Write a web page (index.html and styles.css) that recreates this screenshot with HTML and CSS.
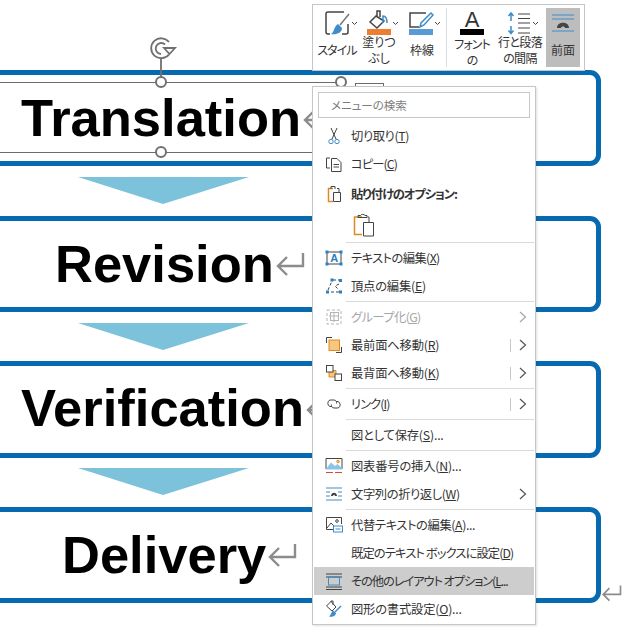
FILE: index.html
```html
<!DOCTYPE html>
<html lang="ja">
<head>
<meta charset="utf-8">
<title>Context menu</title>
<link rel="stylesheet" href="styles.css">
</head>
<body>
<main class="canvas">
  <section class="box">
    <div class="label label-translation"><span>Translation</span><svg class="ret" viewBox="0 0 30 26"><path d="M28 2V15H3M12 6L3 15L12 24"/></svg></div>
  </section>
  <svg class="arrow arrow-second" viewBox="0 0 171 27"><path d="M0 0H171L85 27Z"/></svg>
  <section class="box">
    <div class="label label-revision"><span>Revision</span><svg class="ret" viewBox="0 0 30 26"><path d="M28 2V15H3M12 6L3 15L12 24"/></svg></div>
  </section>
  <svg class="arrow arrow-third" viewBox="0 0 171 27"><path d="M0 0H171L85 27Z"/></svg>
  <section class="box box-tall">
    <div class="label label-verification"><span>Verification</span><svg class="ret" viewBox="0 0 30 26"><path d="M28 2V15H3M12 6L3 15L12 24"/></svg></div>
  </section>
  <svg class="arrow arrow-fourth" viewBox="0 0 171 27"><path d="M0 0H171L85 27Z"/></svg>
  <section class="box">
    <div class="label label-delivery"><span>Delivery</span><svg class="ret" viewBox="0 0 30 26"><path d="M28 2V15H3M12 6L3 15L12 24"/></svg></div>
  </section>
</main>

<svg class="ret ret-end" viewBox="0 0 30 26"><path d="M28 2V15H3M12 6L3 15L12 24"/></svg>

<div class="selection"></div>
<svg class="rotate" viewBox="0 0 28 40"><path class="sel-line" d="M11 21V40"/><path class="sel-line" d="M19 17.500A10 10 0 1 1 19 5M11 17A5.500 5.500 0 1 1 15 7.500"/><path class="sel-line" d="M14 11H25L19.500 17Z"/></svg>
<span class="handle handle-top"></span>
<span class="handle handle-bottom"></span>
<span class="handle handle-right"></span>
<span class="layout-btn"></span>

<div class="toolbar">
  <div class="tool tool-42">
    <svg class="tool-icon" width="42" height="28" viewBox="0 0 42 28"><path class="dark" d="M28 4H12A2 2 0 0 0 10 6V24A2 2 0 0 0 12 26H14M26 26H30A2 2 0 0 0 32 24V16"/><path class="gray" d="M33 6L24 17"/><path class="fill-blue" d="M22 16L26 20C26 25 20 27 15 26C18 25 18 18 22 16Z"/><path class="dark thin" d="M36 14L38.500 16.500L41 14"/></svg>
    <div class="tool-label ls7">スタイル</div>
  </div>
  <div class="tool tool-42">
    <svg class="tool-icon" width="42" height="28" viewBox="0 0 42 28"><path class="dark" d="M18 8L12 14L19 20L26 13ZM19 8V3H22V9"/><path class="blue" d="M25 15V8C27 8 29 10 29 15"/><rect class="bar-orange" x="9" y="21" width="24" height="6"/><path class="dark thin" d="M35 14L37.500 16.500L40 14"/></svg>
    <div class="tool-label">塗りつ<br>ぶし</div>
  </div>
  <div class="tool tool-44">
    <svg class="tool-icon" width="44" height="28" viewBox="0 0 44 28"><path class="dark" d="M26 5H10V19H19"/><path class="blue" d="M31 5L33 7L24 17L20 19L21 15Z"/><rect class="bar-blue" x="9" y="21" width="24" height="6"/><path class="dark thin" d="M35 14L37.500 16.500L40 14"/></svg>
    <div class="tool-label">枠線</div>
  </div>
  <span class="tool-sep"></span>
  <div class="tool tool-44">
    <svg class="tool-icon" width="44" height="28" viewBox="0 0 44 28"><text class="font-a" x="22" y="19">A</text><rect x="10" y="21" width="24" height="6"/></svg>
    <div class="tool-label tool-label-low ls7">フォント<br>の</div>
  </div>
  <div class="tool tool-52">
    <svg class="tool-icon" width="52" height="28" viewBox="0 0 52 28"><path class="blue" d="M17 6V13M14.500 8L17 5L19.500 8M17 18V25M14.500 22.500L17 25.500L19.500 22.500"/><path class="dark thin" d="M24 6H36M24 10.500H36M24 15H36M24 20H36M24 25H36M39 14L41.500 16.500L44 14"/></svg>
    <div class="tool-label ls4">行と段落<br>の間隔</div>
  </div>
  <div class="tool tool-34 tool-active">
    <svg class="tool-icon" width="34" height="28" viewBox="0 0 34 28"><path class="blue thin" d="M6 7H28M6 11H28M6 23H28"/><path class="fill-dark" d="M11 20C11 13 23 13 23 20H19C19 18 15 18 15 20Z"/></svg>
    <div class="tool-label">前面</div>
  </div>
</div>

<nav class="menu">
  <div class="search">メニューの検索</div>

  <div class="row">
    <svg class="ico" viewBox="0 0 18 18"><path class="dark thin" d="M6 1L11 12M12 1L7 12"/><circle class="blue thin" cx="6" cy="14.500" r="2.200"/><circle class="blue thin" cx="12" cy="14.500" r="2.200"/></svg>
    <span class="txt ls2">切り取り(<u>T</u>)</span>
  </div>
  <div class="row">
    <svg class="ico" viewBox="0 0 18 18"><path class="dark thin" d="M5 3H1.500V13H5M6.500 3.500H12L16 7.500V16.500H6.500ZM8.500 9.500H14M8.500 12H14"/></svg>
    <span class="txt ls7">コピー(<u>C</u>)</span>
  </div>
  <div class="row row-head">
    <svg class="ico" viewBox="0 0 18 18"><path class="orange" d="M8 3.500H3.500V16.500H8"/><path class="dark thin" d="M6 4V1.500H10V4M12 3.500H14V7M8.500 7.500H15.500V16.500H8.500Z"/></svg>
    <span class="txt txt-bold ls9">貼り付けのオプション:</span>
  </div>
  <div class="paste-row">
    <svg class="paste-ico" viewBox="0 0 22 24"><path class="orange" d="M9 4H1.500V21.500H9"/><path class="dark thin" d="M5 4.500V2.500H7.500A2.500 2 0 0 1 12 2.500H14V4.500ZM14.500 4H16V9M10.500 9.500H20.500V23H10.500Z"/></svg>
  </div>
  <hr class="sep">

  <div class="row">
    <svg class="ico" viewBox="0 0 18 18"><rect class="dark thin" x="2" y="3" width="14" height="12"/><path class="sq" d="M0.500 1.500h3v3h-3zM14.500 1.500h3v3h-3zM0.500 13.500h3v3h-3zM14.500 13.500h3v3h-3z"/><text class="ico-a" x="9" y="13">A</text></svg>
    <span class="txt ls4">テキストの編集(<u>X</u>)</span>
  </div>
  <div class="row">
    <svg class="ico" viewBox="0 0 18 18"><path class="dark thin dashed" d="M8 3H15M3 13L7 4M14 7L10 9L14 13M6 15H14"/><path class="sq" d="M5.500 1.500h3v3h-3zM14 2h3v3h-3zM1 13.500h3v3h-3zM14 13.500h3v3h-3z"/></svg>
    <span class="txt">頂点の編集(<u>E</u>)</span>
  </div>
  <hr class="sep">

  <div class="row row-off">
    <svg class="ico" viewBox="0 0 18 18"><path class="off dashed" d="M2 2H16V16H2Z"/><rect class="off" x="5.500" y="4.500" width="8" height="8"/><path class="off" d="M4 8H14M9 4V14"/></svg>
    <span class="txt ls4">グループ化(<u>G</u>)</span>
    <svg class="chev" viewBox="0 0 8 12"><path d="M1 1L6.500 6L1 11"/></svg>
  </div>
  <div class="row">
    <svg class="ico" viewBox="0 0 18 18"><path class="dark thin" d="M7 1.500H1.500V7M11 16.500H16.500V11"/><rect class="fill-orange" x="4" y="4" width="10.500" height="10.500"/></svg>
    <span class="txt">最前面へ移動(<u>R</u>)</span>
    <span class="bar"></span>
    <svg class="chev" viewBox="0 0 8 12"><path d="M1 1L6.500 6L1 11"/></svg>
  </div>
  <div class="row">
    <svg class="ico" viewBox="0 0 18 18"><path class="fill-orange" d="M4 6.500H11V13H4Z"/><rect class="dark thin paper" x="1.500" y="1.500" width="6.500" height="6.500"/><rect class="dark thin paper" x="10" y="10" width="6.500" height="6.500"/></svg>
    <span class="txt">最背面へ移動(<u>K</u>)</span>
    <span class="bar"></span>
    <svg class="chev" viewBox="0 0 8 12"><path d="M1 1L6.500 6L1 11"/></svg>
  </div>
  <hr class="sep">

  <div class="row">
    <svg class="ico" viewBox="0 0 18 18"><path class="dark thin" d="M7 11.500H5A3.500 3.500 0 0 1 5 5H9C11 5 12 7 11.500 8.500M11 6.500H13A3.500 3.500 0 0 1 13 13H9C7 13 6 11 6.500 9.500"/></svg>
    <span class="txt ls7">リンク(<u>I</u>)</span>
    <span class="bar"></span>
    <svg class="chev" viewBox="0 0 8 12"><path d="M1 1L6.500 6L1 11"/></svg>
  </div>
  <hr class="sep">

  <div class="row">
    <span class="ico"></span>
    <span class="txt">図として保存(<u>S</u>)...</span>
  </div>
  <hr class="sep">

  <div class="row">
    <svg class="ico" viewBox="0 0 18 18"><path class="dark thin" d="M1 12V1.500H17V12"/><path class="fill-sky" d="M1 12L6 5.500L10 9L12.500 7L17 11V12.500H1Z"/><circle class="fill-orange" cx="13" cy="4.500" r="1.300"/><path class="red" d="M1 15.500H8M10 15.500H17"/></svg>
    <span class="txt">図表番号の挿入(<u>N</u>)...</span>
  </div>
  <div class="row">
    <svg class="ico" viewBox="0 0 18 18"><path class="blue thin" d="M1 3H17M1 7H5M13 7H17M1 11H5M13 11H17M1 15H17"/><path class="fill-dark" d="M6 11C6 6.500 12 6.500 12 11H10C10 9.500 8 9.500 8 11Z"/></svg>
    <span class="txt ls2">文字列の折り返し(<u>W</u>)</span>
    <svg class="chev" viewBox="0 0 8 12"><path d="M1 1L6.500 6L1 11"/></svg>
  </div>
  <hr class="sep">

  <div class="row">
    <svg class="ico" viewBox="0 0 18 18"><path class="dark thin" d="M8 13.500H1.500V1.500H16.500V8M2 12L6 7L9 10"/><circle class="dark thin" cx="12" cy="5" r="1.300"/><rect class="blue thin" x="8.500" y="10" width="9" height="6"/><path class="blue thin" d="M10.500 13H15.500"/></svg>
    <span class="txt ls2">代替テキストの編集(<u>A</u>)...</span>
  </div>
  <div class="row">
    <span class="ico"></span>
    <span class="txt ls7">既定のテキスト ボックスに設定(<u>D</u>)</span>
  </div>
  <div class="row row-hover">
    <svg class="ico" viewBox="0 0 18 18"><path class="dark thin" d="M1 2H17M1 15H17M1 17.500H17M1 5H17"/><rect class="blue thin" x="3.500" y="5" width="11" height="8"/></svg>
    <span class="txt ls9">その他のレイアウト オプション(<u>L</u>...</span>
  </div>
  <div class="row">
    <svg class="ico" viewBox="0 0 18 18"><path class="dark thin" d="M6 1.500L1.500 6L7 11L11 7ZM6 2V1H8V5"/><path class="blue" d="M16 6L10 12"/><path class="fill-blue" d="M8 10.500L11 13C11 16 7 17.500 4 16.500C6 15.500 6 12 8 10.500Z"/></svg>
    <span class="txt">図形の書式設定(<u>O</u>)...</span>
  </div>
</nav>
</body>
</html>
```

FILE: styles.css
```css
html, body {
  margin: 0;
  padding: 0;
  width: 635px;
  height: 627px;
  overflow: hidden;
  background: #fff;
}

body {
  position: relative;
  font-family: "Noto Sans CJK JP", "Noto Sans", sans-serif;
}

/* Flow diagram */
.canvas {
  display: flex;
  flex-direction: column;
  align-items: flex-start;
  padding-top: 70px;
}

.box {
  box-sizing: border-box;
  width: 611px;
  height: 96px;
  margin-left: -10px;
  border: 5px solid #0769b0;
  border-radius: 11px;
  display: flex;
  align-items: center;
}

.box-tall {
  height: 97px;
}

.arrow {
  width: 171px;
  height: 27px;
  margin: 11px 0 12px 78px;
  fill: #7bc2da;
}

.arrow-third {
  margin-bottom: 11px;
}

.arrow-fourth {
  margin-top: 10px;
}

.label {
  display: flex;
  align-items: center;
  font-family: "Liberation Sans", Arial, sans-serif;
  font-size: 52.500px;
  font-weight: 700;
  line-height: 60px;
  color: #000;
  white-space: nowrap;
}

.label-translation { margin-left: 26px; }
.label-revision { margin-left: 60px; }
.label-verification { margin-left: 26px; padding-bottom: 3px; }
.label-delivery { margin-left: 67px; }

.ret {
  width: 30px;
  height: 26px;
  margin-left: 1px;
  fill: none;
  stroke: #8c8c8c;
  stroke-width: 2.400;
}

.ret-end {
  position: absolute;
  left: 601px;
  top: 584px;
  width: 21px;
  height: 18px;
  margin: 0;
}

/* Selection frame */
.selection {
  position: absolute;
  left: -4px;
  top: 82px;
  width: 345px;
  height: 69px;
  border: 1px solid #6b6b6b;
}

.handle {
  position: absolute;
  box-sizing: border-box;
  width: 12px;
  height: 12px;
  border: 2px solid #707070;
  border-radius: 50%;
  background: #fff;
}

.handle-top { left: 155px; top: 76px; }
.handle-bottom { left: 155px; top: 146px; }
.handle-right { left: 335px; top: 76px; }

.rotate {
  position: absolute;
  left: 150px;
  top: 37px;
  width: 28px;
  height: 40px;
  overflow: visible;
}

.sel-line {
  fill: none;
  stroke: #707070;
  stroke-width: 1.800;
}

.layout-btn {
  position: absolute;
  left: 355px;
  top: 83px;
  width: 27px;
  height: 12px;
  border: 1px solid #6b6b6b;
  background: #fff;
}

/* Floating toolbar */
.toolbar {
  position: absolute;
  left: 312px;
  top: 4px;
  box-sizing: border-box;
  width: 273px;
  height: 67px;
  padding: 3px 4px 3px 3px;
  display: flex;
  background: #fff;
  border: 1px solid #c6c6c6;
  font-feature-settings: "palt";
  font-size: 12px;
  color: #333;
}

.tool {
  display: flex;
  flex-direction: column;
  flex: none;
  align-items: center;
}

.tool-34 { width: 34px; }
.tool-42 { width: 42px; }
.tool-44 { width: 44px; }
.tool-52 { width: 52px; }

.tool-active {
  background: #bdbdbd;
}

.tool-icon {
  flex: none;
  display: block;
}

.tool-label {
  flex: 1;
  min-height: 0;
  padding-bottom: 3px;
  display: flex;
  flex-direction: column;
  justify-content: center;
  text-align: center;
  line-height: 16px;
  white-space: nowrap;
}

.tool-label-low {
  padding-bottom: 0;
}

.tool-sep {
  flex: none;
  width: 1px;
  margin: 0 3px 0 2px;
  background: #dcdcdc;
}

.font-a {
  font-family: "Liberation Sans", Arial, sans-serif;
  font-size: 22px;
  text-anchor: middle;
  fill: #333;
}

/* Context menu */
.menu {
  position: absolute;
  left: 312px;
  top: 86px;
  box-sizing: border-box;
  width: 224px;
  height: 539px;
  padding: 0 1px;
  background: #fff;
  border: 1px solid #c6c6c6;
  box-shadow: 1px 1px 2px rgba(0, 0, 0, 0.12);
  font-size: 12.300px;
  letter-spacing: -0.2px;
  color: #333;
  font-feature-settings: "palt";
}

.search {
  box-sizing: border-box;
  height: 26px;
  margin: 5px 4px 4px;
  padding-left: 12px;
  border: 1px solid #c8c8c8;
  font-size: 11.500px;
  letter-spacing: 0;
  line-height: 24px;
  color: #7c7c7c;
}

.row {
  display: flex;
  align-items: center;
  height: 28px;
  padding-left: 11px;
  white-space: nowrap;
}

.row-head {
  margin-top: 2px;
}

.row-hover {
  background: #cdcdcd;
}

.row-off {
  color: #a6a6a6;
}

.txt {
  flex: 1;
  margin-left: 8px;
}

.txt-bold {
  font-weight: 700;
}

.ls2 { letter-spacing: -0.4px; }
.ls4 { letter-spacing: -0.6px; }
.ls7 { letter-spacing: -0.9px; }
.ls9 { letter-spacing: -1.100px; }

.ico {
  flex: none;
  width: 18px;
  height: 18px;
  overflow: visible;
}

.chev {
  flex: none;
  width: 8px;
  height: 12px;
  margin-right: 7px;
  fill: none;
  stroke: #555;
  stroke-width: 1.200;
}

.row-off .chev {
  stroke: #a6a6a6;
}

.bar {
  flex: none;
  width: 1px;
  height: 13px;
  margin-right: 8px;
  background: #c8c8c8;
}

.paste-row {
  display: flex;
  align-items: center;
  height: 33px;
  padding-left: 39px;
}

.paste-ico {
  width: 22px;
  height: 24px;
}

.sep {
  height: 1px;
  margin: 1px 0 1px 32px;
  border: 0;
  background: #d9d9d9;
}

/* Icon strokes and fills */
.dark, .gray, .blue, .orange, .off, .red {
  fill: none;
  stroke-width: 1.500;
}

.dark { stroke: #444; }
.gray { stroke: #777; }
.blue { stroke: #3f8cc8; }
.orange { stroke: #dd8a26; }
.off { stroke: #b5b5b5; stroke-width: 1; }
.red { stroke: #d9483b; stroke-width: 1; }
.thin { stroke-width: 1; }
.dashed { stroke-dasharray: 3 2; }
.paper { fill: #fff; }
.sq { fill: #2f80c0; }
.fill-blue { fill: #3f8cc8; }
.fill-dark { fill: #444; }
.fill-orange { fill: #f7c77e; stroke: #dd8a26; }
.fill-sky { fill: #8cc4e6; }
.bar-orange { fill: #ed7d31; }
.bar-blue { fill: #5b9bd5; }

.ico-a {
  font-family: "Liberation Sans", Arial, sans-serif;
  font-size: 11px;
  font-weight: 700;
  text-anchor: middle;
  fill: #2f80c0;
}
```
